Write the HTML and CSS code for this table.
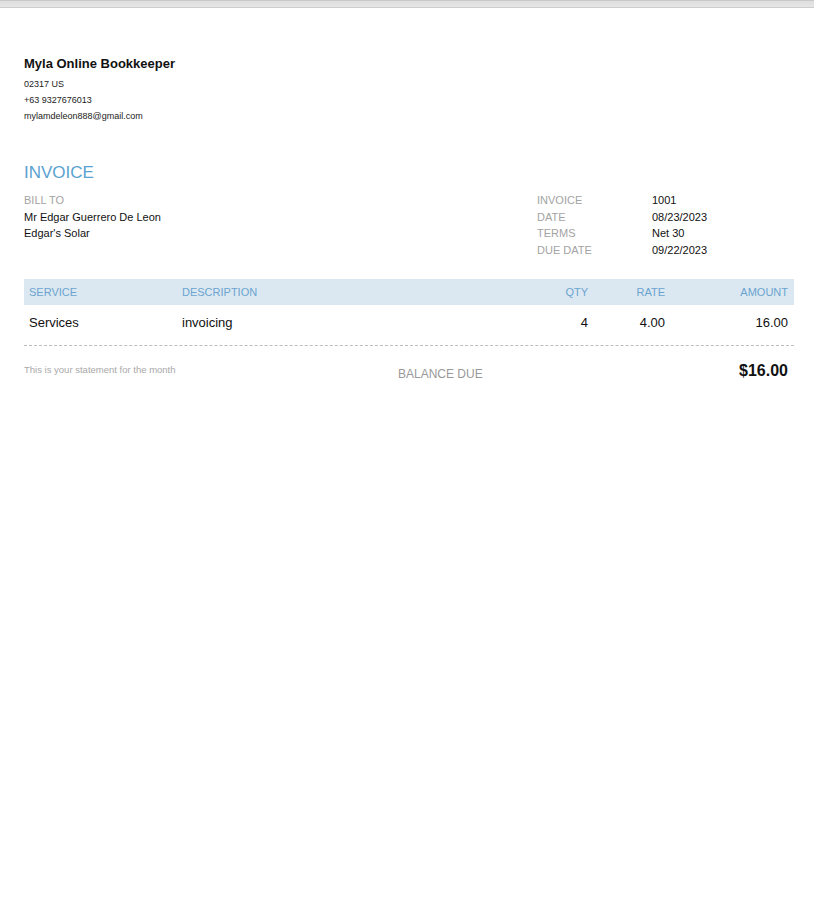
FILE: index.html
```html
<!DOCTYPE html>
<html>
<head>
<meta charset="utf-8">
<link rel="stylesheet" href="styles.css">
</head>
<body>
<div class="topbar"></div>
<div class="page">
  <div class="company">
    <div class="company-name">Myla Online Bookkeeper</div>
    <div class="company-line">02317 US</div>
    <div class="company-line">+63 9327676013</div>
    <div class="company-line">mylamdeleon888@gmail.com</div>
  </div>

  <div class="invoice-title">INVOICE</div>

  <div class="info">
    <div class="bill">
      <div class="label">BILL TO</div>
      <div class="value">Mr Edgar Guerrero De Leon</div>
      <div class="value">Edgar's Solar</div>
    </div>
    <div class="meta">
      <div class="label">INVOICE</div><div class="value">1001</div>
      <div class="label">DATE</div><div class="value">08/23/2023</div>
      <div class="label">TERMS</div><div class="value">Net 30</div>
      <div class="label">DUE DATE</div><div class="value">09/22/2023</div>
    </div>
  </div>

  <div class="table">
    <div class="thead">
      <div class="c-service">SERVICE</div>
      <div class="c-desc">DESCRIPTION</div>
      <div class="c-qty">QTY</div>
      <div class="c-rate">RATE</div>
      <div class="c-amount">AMOUNT</div>
    </div>
    <div class="trow">
      <div class="c-service">Services</div>
      <div class="c-desc">invoicing</div>
      <div class="c-qty">4</div>
      <div class="c-rate">4.00</div>
      <div class="c-amount">16.00</div>
    </div>
  </div>

  <div class="footer">
    <div class="statement">This is your statement for the month</div>
    <div class="balance-label">BALANCE DUE</div>
    <div class="balance-amount">$16.00</div>
  </div>
</div>
</body>
</html>
```

FILE: styles.css
```css
html, body {
  margin: 0;
  padding: 0;
  background: #ffffff;
}
body {
  font-family: "Liberation Sans", Arial, sans-serif;
  color: #111;
}
.topbar {
  height: 6px;
  border-top: 1px solid #c9c9c9;
  border-bottom: 1px solid #cdcdcd;
  background: linear-gradient(#dedede, #e6e6e6);
}
.page {
  padding: 48px 20px 0 24px;
}
.company-name {
  font-size: 13px;
  font-weight: bold;
  line-height: 16px;
  color: #111;
  margin-bottom: 4px;
}
.company-line {
  font-size: 9px;
  line-height: 16px;
  color: #222;
}
.invoice-title {
  margin-top: 39px;
  font-size: 17px;
  line-height: 20px;
  color: #5aa2d0;
}
.info {
  margin-top: 9px;
  display: flex;
  justify-content: space-between;
}
.label {
  font-size: 11px;
  line-height: 16.5px;
  color: #a3a3a3;
}
.value {
  font-size: 11px;
  line-height: 16.5px;
  color: #111;
}
.meta {
  display: grid;
  grid-template-columns: 115px 142px;
}
.table {
  margin-top: 21px;
  border-bottom: 1px dashed #bdbdbd;
  padding-bottom: 6px;
}
.thead, .trow {
  display: grid;
  grid-template-columns: 153px 357px 60px 77px 123px;
  align-items: center;
}
.thead {
  height: 26px;
  background: #dce8f1;
  font-size: 11px;
  color: #6aa4cf;
}
.trow {
  height: 34px;
  font-size: 13px;
  color: #111;
}
.c-service { padding-left: 5px; }
.c-desc { padding-left: 5px; }
.c-qty, .c-rate, .c-amount { text-align: right; padding-right: 6px; }
.footer {
  display: flex;
  align-items: flex-start;
  padding-top: 15px;
}
.statement {
  flex: 0 0 374px;
  font-size: 9.5px;
  line-height: 10px;
  color: #a8a8a8;
  margin-top: 4px;
}
.balance-label {
  flex: 1;
  font-size: 12px;
  line-height: 14px;
  color: #999;
  margin-top: 6px;
}
.balance-amount {
  font-size: 16px;
  font-weight: bold;
  line-height: 20px;
  color: #111;
  padding-right: 6px;
}
```
